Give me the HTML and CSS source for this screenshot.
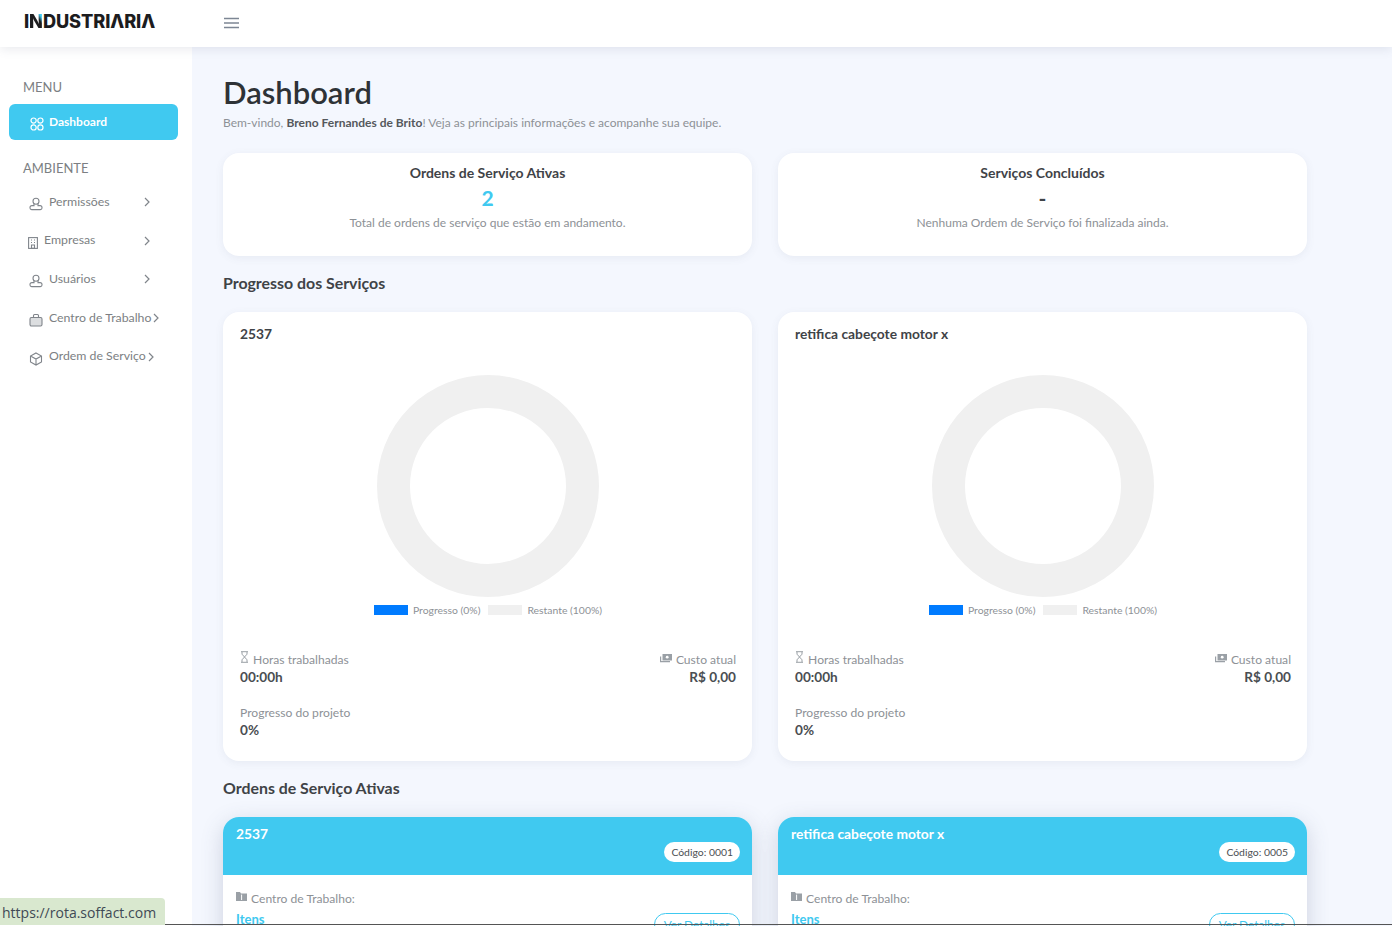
FILE: index.html
```html
<!DOCTYPE html>
<html lang="pt-BR">
<head>
    <meta charset="UTF-8">
    <meta name="viewport" content="width=device-width, initial-scale=1.0">
    <title>Dashboard</title>
    <link rel="stylesheet" href="styles.css">
</head>
<body>
    <header class="topbar">
        <div class="logo">I<span class="logo-n">N</span>DUSTRIΛRIΛ</div>
        <svg class="burger" width="15" height="12" viewBox="0 0 15 12"><path d="M0 1.5h15M0 6h15M0 10.5h15" stroke="#7d8694" stroke-width="1.6" fill="none"/></svg>
    </header>

    <div class="layout">
        <aside class="sidebar">
            <div class="menu-label">MENU</div>
            <a class="menu-active">
                <svg width="14" height="14" viewBox="0 0 14 14" fill="none" stroke="#fff" stroke-width="1.2"><circle cx="3.6" cy="3.6" r="2.6"/><circle cx="10.4" cy="3.6" r="2.6"/><circle cx="3.6" cy="10.4" r="2.6"/><circle cx="10.4" cy="10.4" r="2.6"/></svg>
                <span>Dashboard</span>
            </a>
            <div class="menu-label second">AMBIENTE</div>
            <a class="menu-item">
                <svg class="ico" width="14" height="14" viewBox="0 0 14 14"><circle cx="7" cy="4.2" r="3"/><path d="M5 7v1.6H3a2 2 0 0 0-2 2v.4a1.6 1.6 0 0 0 1.6 1.6h8.8A1.6 1.6 0 0 0 13 11v-.4a2 2 0 0 0-2-2H9V7"/></svg>
                <span class="item-text w-perm">Permissões</span>
                <svg class="chev" width="6" height="10" viewBox="0 0 6 10"><path d="M1 1l4 4-4 4"/></svg>
            </a>
            <a class="menu-item small-ico">
                <svg class="ico" width="10" height="12" viewBox="0 0 10 12"><rect x=".6" y=".6" width="8.8" height="10.8"/><path d="M3 3h1M6 3h1M3 5.5h1M6 5.5h1M3.5 8h3v3.4h-3z"/></svg>
                <span class="item-text w-emp">Empresas</span>
                <svg class="chev" width="6" height="10" viewBox="0 0 6 10"><path d="M1 1l4 4-4 4"/></svg>
            </a>
            <a class="menu-item">
                <svg class="ico" width="14" height="14" viewBox="0 0 14 14"><circle cx="7" cy="4.2" r="3"/><path d="M5 7v1.6H3a2 2 0 0 0-2 2v.4a1.6 1.6 0 0 0 1.6 1.6h8.8A1.6 1.6 0 0 0 13 11v-.4a2 2 0 0 0-2-2H9V7"/></svg>
                <span class="item-text w-perm">Usuários</span>
                <svg class="chev" width="6" height="10" viewBox="0 0 6 10"><path d="M1 1l4 4-4 4"/></svg>
            </a>
            <a class="menu-item">
                <svg class="ico" width="14" height="14" viewBox="0 0 14 14"><rect x="1" y="4.5" width="12" height="8.5" rx="1.4" fill="#9aa0a6" fill-opacity=".35"/><path d="M4.5 4.5V2.5a1 1 0 0 1 1-1h3a1 1 0 0 1 1 1v2"/></svg>
                <span class="item-text">Centro de Trabalho</span>
                <svg class="chev" width="6" height="10" viewBox="0 0 6 10"><path d="M1 1l4 4-4 4"/></svg>
            </a>
            <a class="menu-item">
                <svg class="ico" width="14" height="14" viewBox="0 0 14 14"><path d="M7 1l5.5 3v6L7 13l-5.5-3V4zM1.5 4L7 7l5.5-3M7 7v6"/></svg>
                <span class="item-text">Ordem de Serviço</span>
                <svg class="chev" width="6" height="10" viewBox="0 0 6 10"><path d="M1 1l4 4-4 4"/></svg>
            </a>
        </aside>

        <main class="content">
            <h1>Dashboard</h1>
            <p class="welcome">Bem-vindo, <b>Breno Fernandes de Brito</b>! Veja as principais informações e acompanhe sua equipe.</p>

            <div class="grid">
                <div class="card stat">
                    <h3>Ordens de Serviço Ativas</h3>
                    <div class="stat-num">2</div>
                    <p>Total de ordens de serviço que estão em andamento.</p>
                </div>
                <div class="card stat">
                    <h3>Serviços Concluídos</h3>
                    <div class="stat-num dash">-</div>
                    <p>Nenhuma Ordem de Serviço foi finalizada ainda.</p>
                </div>
            </div>

            <h2>Progresso dos Serviços</h2>
            <div class="grid">
                <div class="card progress">
                    <div class="progress-title">2537</div>
                    <svg class="donut" width="222" height="222" viewBox="0 0 222 222"><circle cx="111" cy="111" r="94.5" fill="none" stroke="#f0f0f0" stroke-width="33"/></svg>
                    <div class="legend">
                        <i class="swatch blue"></i><span>Progresso (0%)</span>
                        <i class="swatch grey"></i><span>Restante (100%)</span>
                    </div>
                    <div class="info">
                        <div>
                            <div class="info-label"><svg class="hour" width="9" height="12" viewBox="0 0 9 12"><path d="M1 .7h7M1 11.3h7M2 1v2.2L4.5 6 2 8.8V11M7 1v2.2L4.5 6 7 8.8V11"/></svg> Horas trabalhadas</div>
                            <div class="info-value">00:00h</div>
                        </div>
                        <div class="right">
                            <div class="info-label"><svg width="12" height="9" viewBox="0 0 12 9"><path d="M2.5 0H12v6.5H2.5z" fill="#9aa0a6"/><path d="M0 2.5h1.2v4.6H10v1.2H0z" fill="#9aa0a6"/><circle cx="7.2" cy="3.2" r="1.4" fill="#fff"/></svg> Custo atual</div>
                            <div class="info-value">R$ 0,00</div>
                        </div>
                    </div>
                    <div class="info-label project">Progresso do projeto</div>
                    <div class="info-value">0%</div>
                </div>
                <div class="card progress">
                    <div class="progress-title">retifica cabeçote motor x</div>
                    <svg class="donut" width="222" height="222" viewBox="0 0 222 222"><circle cx="111" cy="111" r="94.5" fill="none" stroke="#f0f0f0" stroke-width="33"/></svg>
                    <div class="legend">
                        <i class="swatch blue"></i><span>Progresso (0%)</span>
                        <i class="swatch grey"></i><span>Restante (100%)</span>
                    </div>
                    <div class="info">
                        <div>
                            <div class="info-label"><svg class="hour" width="9" height="12" viewBox="0 0 9 12"><path d="M1 .7h7M1 11.3h7M2 1v2.2L4.5 6 2 8.8V11M7 1v2.2L4.5 6 7 8.8V11"/></svg> Horas trabalhadas</div>
                            <div class="info-value">00:00h</div>
                        </div>
                        <div class="right">
                            <div class="info-label"><svg width="12" height="9" viewBox="0 0 12 9"><path d="M2.5 0H12v6.5H2.5z" fill="#9aa0a6"/><path d="M0 2.5h1.2v4.6H10v1.2H0z" fill="#9aa0a6"/><circle cx="7.2" cy="3.2" r="1.4" fill="#fff"/></svg> Custo atual</div>
                            <div class="info-value">R$ 0,00</div>
                        </div>
                    </div>
                    <div class="info-label project">Progresso do projeto</div>
                    <div class="info-value">0%</div>
                </div>
            </div>

            <h2>Ordens de Serviço Ativas</h2>
            <div class="grid">
                <div class="card order">
                    <div class="order-head">
                        <div class="order-name">2537</div>
                        <span class="badge">Código: 0001</span>
                    </div>
                    <div class="order-body">
                        <div class="info-label"><svg width="11" height="10" viewBox="0 0 11 10"><path d="M0 0h4l1 1.5h6V9H0z" fill="#9aa0a6"/><path d="M5.6 2.6V8" stroke="#fff"/></svg> Centro de Trabalho:</div>
                        <div class="order-row">
                            <a class="items-link">Itens</a>
                            <a class="details">Ver Detalhes</a>
                        </div>
                    </div>
                </div>
                <div class="card order">
                    <div class="order-head">
                        <div class="order-name">retifica cabeçote motor x</div>
                        <span class="badge">Código: 0005</span>
                    </div>
                    <div class="order-body">
                        <div class="info-label"><svg width="11" height="10" viewBox="0 0 11 10"><path d="M0 0h4l1 1.5h6V9H0z" fill="#9aa0a6"/><path d="M5.6 2.6V8" stroke="#fff"/></svg> Centro de Trabalho:</div>
                        <div class="order-row">
                            <a class="items-link">Itens</a>
                            <a class="details">Ver Detalhes</a>
                        </div>
                    </div>
                </div>
            </div>
        </main>
    </div>

    <div class="status-url">https://rota.soffact.com</div>
    <div class="window-edge"></div>
</body>
</html>
```

FILE: styles.css
```css
* {
    box-sizing: border-box;
}

html, body {
    height: 926px;
    overflow: hidden;
}

body {
    margin: 0;
    font-family: 'Lato', 'Noto Sans', sans-serif;
    background-color: #f4f7fe;
    color: #3f4347;
}

.topbar {
    position: relative;
    z-index: 2;
    display: flex;
    align-items: center;
    height: 47px;
    padding-left: 24px;
    background-color: #fff;
    box-shadow: 0 2px 10px rgba(90, 100, 130, 0.14);
}

.logo {
    width: 200px;
    margin-top: -5px;
    font-family: 'Inter', sans-serif;
    font-size: 18.2px;
    font-weight: 800;
    letter-spacing: -0.1px;
    color: #1c1c1e;
}

.logo-n {
    background: linear-gradient(to bottom left, #40c9f0 22%, #1c1c1e 36%);
    -webkit-background-clip: text;
    background-clip: text;
    color: transparent;
}

.burger {
    margin-top: -2px;
}

.layout {
    display: flex;
}

.sidebar {
    flex: 0 0 192px;
    height: 879px;
    padding: 32px 14px 0 9px;
    background-color: #fff;
}

.menu-label {
    padding-left: 14px;
    height: 17px;
    font-size: 13px;
    line-height: 17px;
    color: #7c7f83;
}

.menu-label.second {
    margin-top: 20px;
    margin-bottom: 6.5px;
}

.menu-active {
    display: flex;
    align-items: center;
    gap: 5px;
    height: 36px;
    margin-top: 8px;
    padding: 0 0 0 21px;
    border-radius: 6px;
    background-color: #40c9f0;
    color: #fff;
    font-size: 12px;
    font-weight: 700;
}

.menu-active span {
    margin-top: -2px;
}

.menu-active svg {
    margin-top: 3px;
}

.menu-item {
    display: flex;
    align-items: center;
    height: 38.6px;
    padding-left: 20px;
    font-size: 12.3px;
    color: #7c7f83;
}

.ico {
    margin-top: 3px;
    margin-right: 6px;
    fill: none;
    stroke: #80858b;
    stroke-width: 1.1;
    flex: none;
}

.small-ico {
    padding-left: 19px;
}

.item-text {
    margin-top: -3px;
}

.w-perm {
    width: 93px;
}

.w-emp {
    width: 98px;
}

.chev {
    margin-left: 2px;
    margin-top: -1px;
    fill: none;
    stroke: #80858b;
    stroke-width: 1.2;
}

.content {
    flex: 1;
    padding: 27px 85px 0 31px;
    min-width: 0;
}

h1 {
    margin: 0;
    font-size: 31px;
    line-height: 36px;
    font-weight: 600;
    color: #2e3236;
}

.welcome {
    margin: 5px 0 22px;
    font-size: 12px;
    line-height: 16px;
    color: #8d9196;
}

.welcome b {
    color: #54585c;
}

.grid {
    display: grid;
    grid-template-columns: 529px 529px;
    gap: 26px;
}

.card {
    background-color: #fff;
    border-radius: 16px;
    box-shadow: 0 2px 8px rgba(80, 90, 120, 0.08);
}

.stat {
    height: 103px;
    padding-top: 11px;
    text-align: center;
}

.stat h3 {
    margin: 0;
    font-size: 14px;
    line-height: 18px;
    font-weight: 700;
    color: #3f4347;
}

.stat-num {
    height: 26px;
    margin-top: 2px;
    font-size: 21px;
    line-height: 27px;
    font-weight: 700;
    color: #40c9f0;
}

.stat-num.dash {
    color: #3f4347;
}

.stat p {
    margin: 5px 0 0;
    font-size: 12px;
    line-height: 16px;
    color: #8d9196;
}

h2 {
    margin: 0;
    padding: 17px 0 20px;
    font-size: 15.9px;
    line-height: 19px;
    font-weight: 700;
    color: #3f4347;
}

.progress {
    height: 449px;
    padding: 13px 16px 0 17px;
}

.progress-title {
    font-size: 13.8px;
    line-height: 18px;
    font-weight: 700;
}

.donut {
    display: block;
    margin: 32px auto 0;
}

.legend {
    display: flex;
    justify-content: center;
    align-items: center;
    height: 12px;
    margin-top: 7px;
    font-size: 10.4px;
    color: #8d9196;
}

.swatch {
    width: 34px;
    height: 10px;
    margin-right: 5px;
}

.legend span + .swatch {
    margin-left: 8px;
}

.blue {
    background-color: #007bff;
}

.grey {
    background-color: #f0f0f0;
}

.info {
    display: flex;
    justify-content: space-between;
    margin-top: 35px;
}

.right {
    text-align: right;
}

.info-label {
    font-size: 12.1px;
    line-height: 17px;
    color: #8d9196;
}

.info-label svg {
    margin-right: 1px;
    vertical-align: 1px;
}

.hour {
    fill: none;
    stroke: #9aa0a6;
    stroke-width: 1;
    vertical-align: 2px;
}

.info-value {
    font-size: 13.6px;
    line-height: 19px;
    font-weight: 700;
    color: #4a4e52;
}

.project {
    margin-top: 17px;
    margin-bottom: 0;
}

.order {
    overflow: hidden;
    height: 190px;
    box-shadow: 0 6px 22px rgba(70, 80, 120, 0.22);
}

.order-head {
    display: flex;
    flex-direction: column;
    height: 58px;
    padding: 8px 12px 0 13px;
    background-color: #40c9f0;
    color: #fff;
}

.order-name {
    font-size: 13.8px;
    line-height: 18px;
    font-weight: 700;
}

.badge {
    align-self: flex-end;
    margin-top: -1px;
    padding: 0 7px;
    height: 20px;
    border-radius: 10px;
    background-color: #fff;
    color: #4a4e52;
    font-size: 10.4px;
    line-height: 20px;
}

.order-body {
    padding: 15px 12px 0 13px;
}

.order-row {
    display: flex;
    justify-content: space-between;
    margin-top: 4px;
}

.items-link {
    font-size: 13px;
    font-weight: 700;
    color: #40c9f0;
}

.details {
    margin-top: 2px;
    padding: 3px 9px;
    border: 1px solid #40c9f0;
    border-radius: 14px;
    font-size: 11.8px;
    color: #40c9f0;
}

.status-url {
    position: fixed;
    left: 0;
    bottom: 1px;
    width: 165px;
    height: 27px;
    padding: 5px 0 0 2px;
    border-top-right-radius: 4px;
    background-color: #d9e8cf;
    font-family: 'Open Sans', sans-serif;
    font-size: 14px;
    line-height: 20px;
    color: #3f4a55;
}

.window-edge {
    position: fixed;
    left: 165px;
    right: 0;
    bottom: 1px;
    height: 1px;
    background-color: #555;
}
```
